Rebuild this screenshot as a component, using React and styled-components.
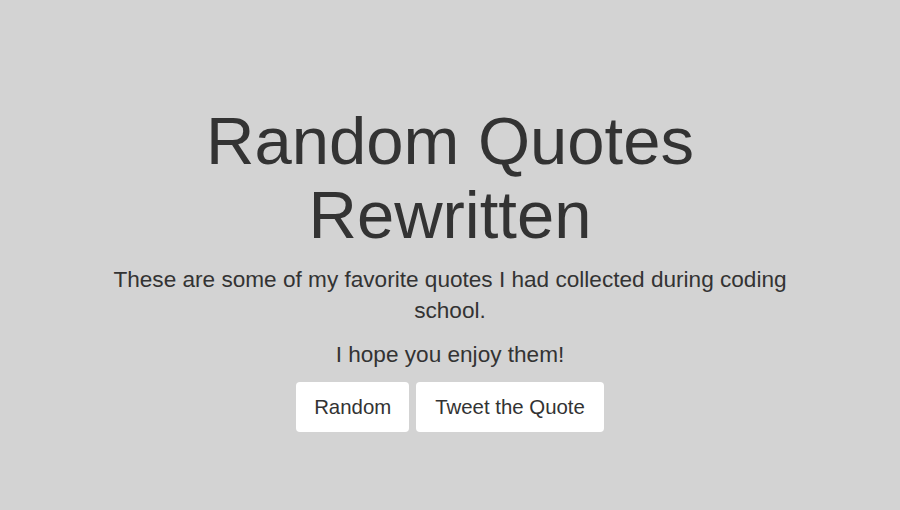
import React from "react";
import styled, { createGlobalStyle } from "styled-components";

const GlobalStyle = createGlobalStyle`
  html, body {
    margin: 0;
    padding: 0;
    background: #d3d3d3;
  }
  body {
    font-family: "Liberation Sans", Arial, Helvetica, sans-serif;
    color: #333333;
  }
`;

const Page = styled.main`
  min-height: 510px;
  box-sizing: border-box;
  padding-top: 104px;
  display: flex;
  justify-content: center;
`;

const Container = styled.section`
  width: 720px;
  display: flex;
  flex-direction: column;
  align-items: center;
  text-align: center;
`;

const Title = styled.h1`
  margin: 0 0 12px;
  font-size: 67px;
  line-height: 74px;
  font-weight: 400;
  color: #333333;
`;

const Text = styled.p`
  margin: 0 0 12px;
  font-size: 22.6px;
  line-height: 31.3px;
  color: #333333;
`;

const ButtonRow = styled.div`
  display: flex;
  gap: 7px;
  justify-content: center;
`;

const Button = styled.button`
  height: 50px;
  padding: 0 ${(p) => (p.$wide ? 19 : 18)}px;
  border: none;
  border-radius: 4px;
  background: #ffffff;
  color: #333333;
  font-family: "Liberation Sans", Arial, Helvetica, sans-serif;
  font-size: 20.4px;
  line-height: 50px;
  cursor: pointer;
`;

export default function App() {
  return (
    <>
      <GlobalStyle />
      <Page>
        <Container>
          <Title>Random Quotes Rewritten</Title>
          <Text>
            These are some of my favorite quotes I had collected during coding
            school.
          </Text>
          <Text>I hope you enjoy them!</Text>
          <ButtonRow>
            <Button>Random</Button>
            <Button $wide>Tweet the Quote</Button>
          </ButtonRow>
        </Container>
      </Page>
    </>
  );
}
